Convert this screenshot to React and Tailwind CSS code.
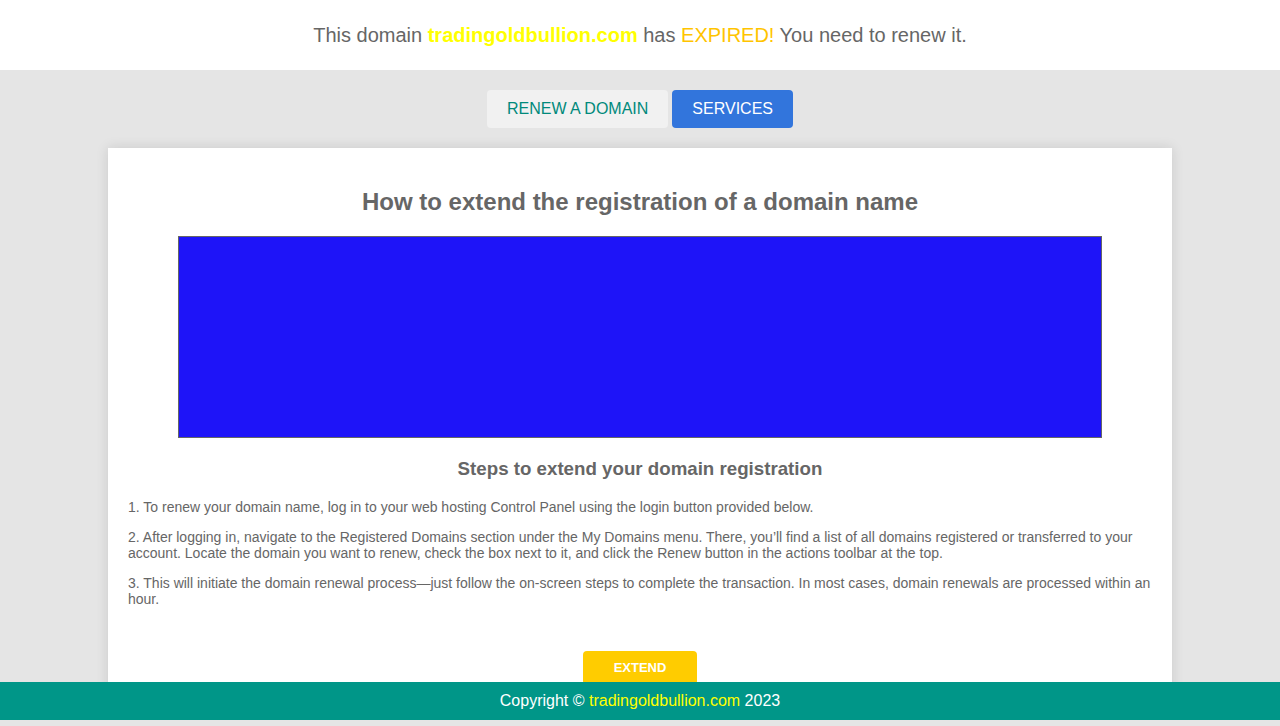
export default function App() {
  const font = { fontFamily: '"Liberation Sans", Arial, sans-serif' };
  return (
    <div className="h-[726px] overflow-hidden bg-[#e5e5e5] text-[#666]" style={font}>
      <header className="h-[70px] bg-white flex items-center justify-center text-[20px]">
        <span>
          This domain <b className="text-[#ffff00]">tradingoldbullion.com</b> has{" "}
          <span className="text-[#ffc400]">EXPIRED!</span> You need to renew it.
        </span>
      </header>
      <nav className="flex justify-center gap-[4px] mt-[20px]">
        <button className="h-[38px] px-5 rounded-[4px] bg-[#f1f1f1] text-[#00897b] text-[16px]">RENEW A DOMAIN</button>
        <button className="h-[38px] px-5 rounded-[4px] bg-[#3275dc] text-white text-[16px]">SERVICES</button>
      </nav>
      <main className="mx-auto mt-[20px] w-[1064px] bg-white shadow-[0_0_12px_rgba(0,0,0,0.12)] px-5 pt-[40px] pb-[20px]">
        <h1 className="text-center text-[24px] leading-[28px] font-bold">How to extend the registration of a domain name</h1>
        <div className="mx-auto mt-[20px] w-[924px] h-[202px] border border-[#666] bg-[#1e14f8]"></div>
        <h2 className="text-center text-[18.72px] leading-[22px] font-bold mt-[20px]">Steps to extend your domain registration</h2>
        <div className="mt-[19px] text-[14px] leading-[16px] flex flex-col gap-[14px]">
          <p>1. To renew your domain name, log in to your web hosting Control Panel using the login button provided below.</p>
          <p>2. After logging in, navigate to the Registered Domains section under the My Domains menu. There, you’ll find a list of all domains registered or transferred to your account. Locate the domain you want to renew, check the box next to it, and click the Renew button in the actions toolbar at the top.</p>
          <p>3. This will initiate the domain renewal process—just follow the on-screen steps to complete the transaction. In most cases, domain renewals are processed within an hour.</p>
        </div>
        <div className="flex justify-center mt-[44px]">
          <button className="w-[114px] h-[34px] rounded-[4px] bg-[#ffcc00] text-white text-[13px] font-bold">EXTEND</button>
        </div>
      </main>
      <footer className="fixed left-0 right-0 bottom-[6px] h-[38px] bg-[#009688] text-white text-[16px] flex items-center justify-center">
        <span>
          Copyright © <span className="text-[#ffff00]">tradingoldbullion.com</span> 2023
        </span>
      </footer>
    </div>
  );
}
